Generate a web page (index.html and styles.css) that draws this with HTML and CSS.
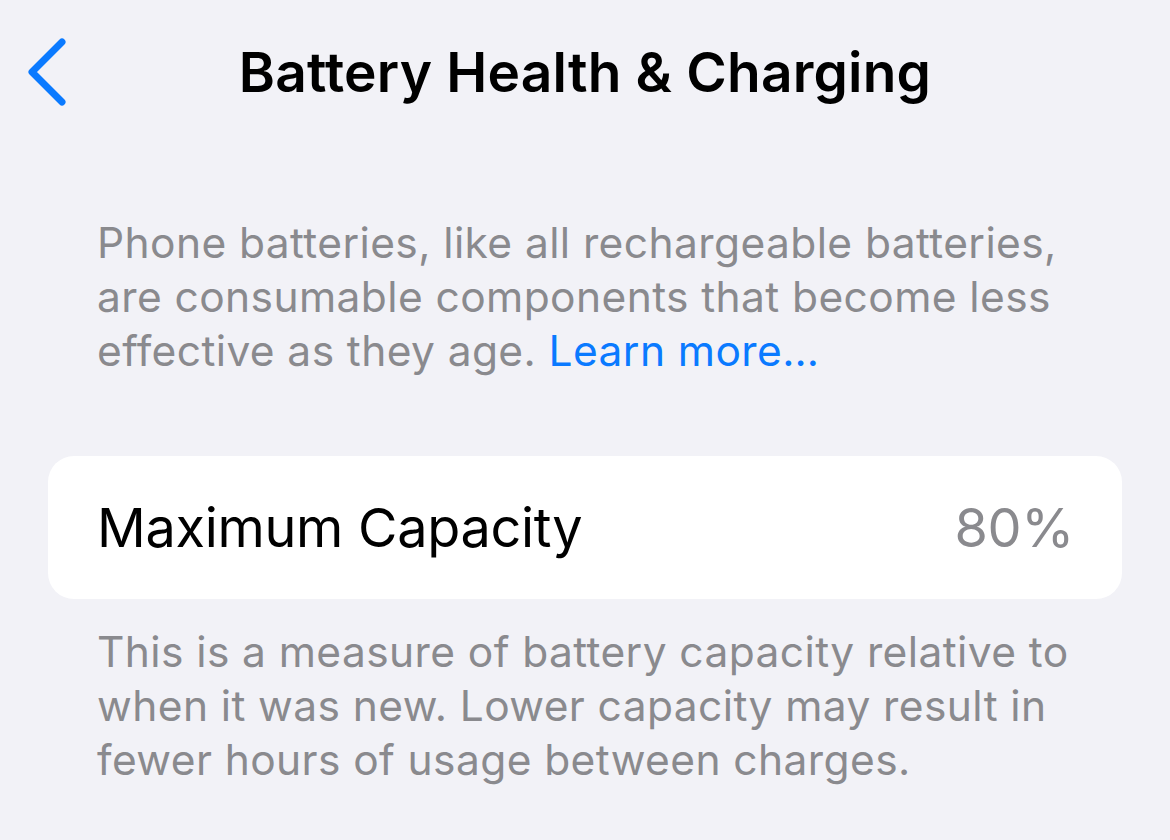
FILE: index.html
```html
<!DOCTYPE html>
<html lang="en">
<head>
<meta charset="utf-8">
<link rel="stylesheet" href="styles.css">
<title>Battery Health &amp; Charging</title>
</head>
<body>
<div class="screen">
  <header class="navbar">
    <button class="back" aria-label="Back">
      <svg width="44" height="70" viewBox="0 0 44 70"><path d="M36 5 L6 35 L36 65" fill="none" stroke="#0A7AFF" stroke-width="7" stroke-linecap="round" stroke-linejoin="round"/></svg>
    </button>
    <h1 class="title">Battery Health &amp; Charging</h1>
  </header>
  <p class="note intro">Phone batteries, like all rechargeable batteries, are consumable components that become less effective as they age. <a class="link" href="#">Learn more…</a></p>
  <div class="card">
    <span class="label">Maximum Capacity</span>
    <span class="value">80%</span>
  </div>
  <p class="note footer">This is a measure of battery capacity relative to when it was new. Lower capacity may result in fewer hours of usage between charges.</p>
</div>
</body>
</html>
```
FILE: styles.css
```css
html, body {
  margin: 0;
  padding: 0;
  background: #F2F2F7;
}
body {
  font-family: Inter, "Noto Sans", sans-serif;
  width: 1170px;
  height: 840px;
  overflow: hidden;
}
.screen {
  padding: 0 48px;
}
.navbar {
  position: relative;
  height: 146px;
  display: flex;
  align-items: center;
  justify-content: center;
}
.back {
  position: absolute;
  left: -22px;
  top: 37px;
  background: none;
  border: 0;
  padding: 0;
  width: 44px;
  height: 70px;
}
.back svg { display: block; }
.title {
  margin: 0;
  font-size: 55px;
  font-weight: 600;
  letter-spacing: 0.2px;
  color: #000;
  transform: translateY(-1px);
}
.note {
  margin: 0;
  padding: 0 49px;
  font-size: 42.5px;
  line-height: 54px;
  color: #8A8A8E;
  letter-spacing: 0.4px;
}
.intro {
  margin-top: 70px;
}
.link {
  color: #0A7AFF;
  text-decoration: none;
}
.card {
  margin-top: 78px;
  height: 143px;
  background: #fff;
  border-radius: 26px;
  display: flex;
  align-items: center;
  justify-content: space-between;
  padding: 0 48px 0 49px;
  font-size: 54px;
  letter-spacing: -0.3px;
}
.label { color: #000; }
.value { color: #8A8A8E; }
.footer {
  margin-top: 26px;
}
```
